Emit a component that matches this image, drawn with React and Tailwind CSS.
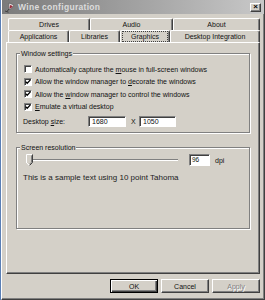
import React from "react";

function WineIcon() {
  return (
    <svg width="11" height="11" viewBox="0 0 11 11" className="shrink-0">
      <path d="M5 1 L10 3 L7.5 6.5 Q6 7.5 4.5 6.8 Z" fill="#e8e8e8" stroke="#5a5a5a" strokeWidth="0.7" />
      <path d="M5.2 6.8 L3 9.5" stroke="#404040" strokeWidth="1" />
      <path d="M1 9 L4.5 10.2" stroke="#404040" strokeWidth="1" />
      <path d="M6 3 L8.8 4 L7.3 6 Q6.3 6.6 5.4 6.1 Z" fill="#9a2a3a" />
    </svg>
  );
}

function Check() {
  return (
    <svg width="6" height="6" viewBox="0 0 6 6">
      <path d="M0.6 2.6 L2.2 4.3 L5.4 0.9" fill="none" stroke="#000" strokeWidth="1.3" />
    </svg>
  );
}

function CheckRow({ checked, children }) {
  return (
    <div className="h-[12.5px] flex items-center">
      <div className="w-[8px] h-[8px] bg-white border border-t-[#808080] border-l-[#808080] border-r-white border-b-white shadow-[inset_1px_1px_0_#404040] flex items-center justify-center shrink-0">
        {checked ? <Check /> : null}
      </div>
      <span className="ml-[3px] text-[7px] leading-none whitespace-nowrap">{children}</span>
    </div>
  );
}

function Tab({ w, children, selected }) {
  return (
    <div
      className={
        "h-[12px] flex items-center justify-center border-l border-t border-r border-l-white border-t-white border-r-[#404040] shadow-[inset_-1px_0_0_#808080] rounded-t-[2px] bg-[#d4d0c8] " +
        w
      }
    >
      {selected ? (
        <span className="text-[7px] leading-none whitespace-nowrap border border-dotted border-[#404040] px-[8px] py-[1px]">{children}</span>
      ) : (
        <span className="text-[7px] leading-none whitespace-nowrap">{children}</span>
      )}
    </div>
  );
}

function Input({ w, value }) {
  return (
    <div
      className={
        "h-[11px] bg-white border border-t-[#808080] border-l-[#808080] border-r-white border-b-white shadow-[inset_1px_1px_0_#404040] flex items-center pl-[3px] text-[7px] leading-none " +
        w
      }
    >
      {value}
    </div>
  );
}

function Group({ label, className, children }) {
  return (
    <div className={"relative border border-[#808080] shadow-[1px_1px_0_#fff,inset_1px_1px_0_#fff] " + className}>
      <span className="absolute left-[3px] top-[-4px] bg-[#d4d0c8] px-[1px] text-[7px] leading-[8px] whitespace-nowrap">{label}</span>
      {children}
    </div>
  );
}

function Button({ children, def, disabled }) {
  return (
    <div
      className={
        "w-[48px] h-[14px] flex items-center justify-center text-[7px] leading-none border " +
        (def
          ? "border-black shadow-[inset_1px_1px_0_#fff,inset_-1px_-1px_0_#404040,inset_-2px_-2px_0_#808080]"
          : "border-t-white border-l-white border-r-[#404040] border-b-[#404040] shadow-[inset_-1px_-1px_0_#808080]") +
        (disabled ? " text-[#808080] [text-shadow:1px_1px_0_#fff]" : "")
      }
    >
      {children}
    </div>
  );
}

export default function App() {
  return (
    <div className="w-[265px] h-[300px] flex bg-[#5a7fb5] font-['Liberation_Sans',Arial,sans-serif] text-[#111] overflow-hidden">
      <div className="w-[264px] ml-[1px] h-[300px] flex flex-col bg-[#d4d0c8] border-l border-l-white border-r border-r-[#404040] border-b border-b-[#404040] shadow-[inset_-1px_-1px_0_#808080]">
        {/* Title bar */}
        <div className="h-[14px] shrink-0 flex items-center bg-gradient-to-r from-[#7b7b7b] to-[#c8c8c8] pl-[2px] pr-[2px]">
          <WineIcon />
          <span className="ml-[3px] text-[8.5px] font-bold text-[#dcdcdc] leading-none tracking-[0.3px]">Wine configuration</span>
          <div className="ml-auto mr-[1px] w-[11px] h-[9px] bg-[#d4d0c8] border border-t-white border-l-white border-r-[#404040] border-b-[#404040] shadow-[inset_-1px_-1px_0_#808080] flex items-center justify-center text-[8px] leading-none font-bold text-black">
            ×
          </div>
        </div>

        <div className="flex flex-col pl-[4px] pr-[4px]">
          {/* Tabs */}
          <div className="mt-[4px] flex pl-[2px]">
            <Tab w="w-[82px]">Drives</Tab>
            <Tab w="w-[83px]">Audio</Tab>
            <Tab w="w-[87px]">About</Tab>
          </div>
          <div className="flex pl-[2px] relative z-10">
            <Tab w="w-[61px]">Applications</Tab>
            <Tab w="w-[51px]">Libraries</Tab>
            <Tab w="w-[50px]" selected>Graphics</Tab>
            <Tab w="w-[90px]">Desktop Integration</Tab>
          </div>

          {/* Panel */}
          <div className="h-[232px] border border-t-white border-l-white border-r-[#404040] border-b-[#404040] shadow-[inset_-1px_-1px_0_#808080] flex flex-col pt-[10px] pl-[9px] pr-[9px]">
            <Group label="Window settings" className="h-[80px] pt-[9px] pl-[7px]">
              <CheckRow>
                Automatically capture the <span className="underline">m</span>ouse in full-screen windows
              </CheckRow>
              <CheckRow checked>
                Allow the window manager to <span className="underline">d</span>ecorate the windows
              </CheckRow>
              <CheckRow checked>
                Allow the <span className="underline">w</span>indow manager to control the windows
              </CheckRow>
              <CheckRow checked>
                <span className="underline">E</span>mulate a virtual desktop
              </CheckRow>
              <div className="mt-[3px] flex items-center">
                <span className="w-[65px] -ml-[1px] text-[7px] leading-none">
                  Desktop <span className="underline">s</span>ize:
                </span>
                <Input w="w-[38px]" value="1680" />
                <span className="ml-[5px] w-[8px] text-[7px] leading-none">X</span>
                <Input w="w-[37px]" value="1050" />
              </div>
            </Group>

            <Group label="Screen resolution" className="mt-[14px] h-[82px] pt-[6px] pl-[7px]">
              <div className="h-[12px] flex items-center">
                <div className="relative ml-[2px] w-[152px] h-[12px] flex items-center">
                  <div className="w-full h-[2px] border-t border-t-[#808080] border-b border-b-white"></div>
                  <svg width="7" height="12" viewBox="0 0 7 12" className="absolute left-0 top-0">
                    <polygon points="0.5,0.5 6.5,0.5 6.5,8.5 3.5,11.5 0.5,8.5" fill="#d4d0c8" />
                    <polyline points="0.5,9 0.5,0.5 6,0.5" fill="none" stroke="#fff" strokeWidth="1" />
                    <polyline points="6.5,0.5 6.5,8.5 3.5,11.5" fill="none" stroke="#404040" strokeWidth="1" />
                    <polyline points="5.5,1.5 5.5,8.2 3.5,10.2" fill="none" stroke="#808080" strokeWidth="1" />
                    <line x1="0.5" y1="8.7" x2="3.3" y2="11.4" stroke="#fff" strokeWidth="1" />
                  </svg>
                </div>
                <div className="ml-[11px]">
                  <div className="h-[12px] w-[21px] bg-white border border-t-[#808080] border-l-[#808080] border-r-white border-b-white shadow-[inset_1px_1px_0_#404040] flex items-center pl-[2px] text-[6.5px] leading-none">
                    96
                  </div>
                </div>
                <span className="ml-[5px] text-[7px] leading-none">dpi</span>
              </div>
              <div className="mt-[7px] -ml-[1px] h-[10px] flex items-center text-[8px] leading-none whitespace-nowrap text-[#222]">
                This is a sample text using 10 point Tahoma
              </div>
            </Group>
          </div>

          {/* Buttons */}
          <div className="mt-[5px] flex justify-end gap-[3px]">
            <Button def>OK</Button>
            <Button>Cancel</Button>
            <Button disabled>Apply</Button>
          </div>
        </div>
      </div>
    </div>
  );
}
